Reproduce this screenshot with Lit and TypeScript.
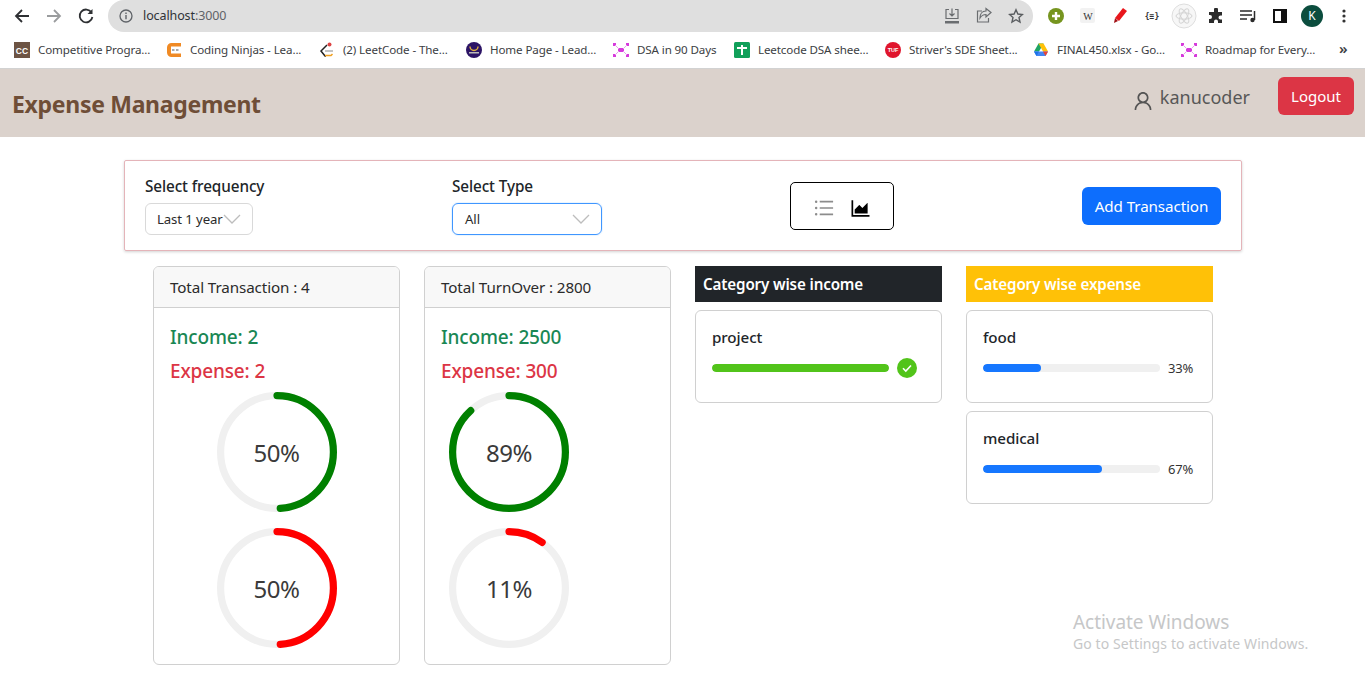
import { LitElement, html, css, svg } from "lit";
import { customElement } from "lit/decorators.js";

const USER = "M858.5 763.6a374 374 0 00-80.6-119.5 375.63 375.63 0 00-119.5-80.6c-.4-.2-.8-.3-1.2-.5C719.5 518 760 444.7 760 362c0-137-111-248-248-248S264 225 264 362c0 82.7 40.5 156 102.8 201.1-.4.2-.8.3-1.2.5-44.8 18.9-85 46-119.5 80.6a375.63 375.63 0 00-80.6 119.5A371.7 371.7 0 00136 901.8a8 8 0 008 8.2h60c4.4 0 8-3.6 8-7.8 2-77.2 33-149.5 87.8-204.3 56.7-56.7 132-87.9 212.2-87.9s155.5 31.2 212.2 87.9C779 752.7 810 825 812 902.2c.1 4.4 3.6 7.8 8 7.8h60a8 8 0 008-8.2c-1-47.8-10.9-94.3-29.5-138.2zM512 534c-45.9 0-89.1-17.9-121.6-50.4S340 407.9 340 362c0-45.9 17.9-89.1 50.4-121.6S466.1 190 512 190s89.1 17.9 121.6 50.4S684 316.1 684 362c0 45.9-17.9 89.1-50.4 121.6S557.9 534 512 534z";
const LIST = "M912 192H328c-4.4 0-8 3.6-8 8v56c0 4.4 3.6 8 8 8h584c4.4 0 8-3.6 8-8v-56c0-4.4-3.6-8-8-8zm0 284H328c-4.4 0-8 3.6-8 8v56c0 4.4 3.6 8 8 8h584c4.4 0 8-3.6 8-8v-56c0-4.4-3.6-8-8-8zm0 284H328c-4.4 0-8 3.6-8 8v56c0 4.4 3.6 8 8 8h584c4.4 0 8-3.6 8-8v-56c0-4.4-3.6-8-8-8zM104 228a56 56 0 10112 0 56 56 0 10-112 0zm0 284a56 56 0 10112 0 56 56 0 10-112 0zm0 284a56 56 0 10112 0 56 56 0 10-112 0z";
const AREA = "M888 792H200V168c0-4.4-3.6-8-8-8h-56c-4.4 0-8 3.6-8 8v688c0 4.4 3.6 8 8 8h752c4.4 0 8-3.6 8-8v-56c0-4.4-3.6-8-8-8zm-616-64h536c4.4 0 8-3.6 8-8V284c0-7.2-8.7-10.7-13.7-5.7L592 488.6l-125.4-124a8.03 8.03 0 00-11.3 0l-189 189.6a7.87 7.87 0 00-2.3 5.6V720c0 4.4 3.6 8 8 8z";

const fav: Record<string, unknown> = {
  cc: svg`<rect x="0" y="0" width="16" height="16" fill="#6d5444"/><text x="8" y="11.5" font-size="8.5" font-weight="700" fill="#fff" text-anchor="middle" font-family="Liberation Sans">CC</text>`,
  cn: svg`<path d="M15 1H5.500A4.500 4.500 0 0 0 1 5.500v5A4.500 4.500 0 0 0 5.500 15H15v-3.500H5V4.500h10z" fill="#f08a24"/><rect x="6" y="7.500" width="2.500" height="1" fill="#555"/><rect x="10" y="7.500" width="2.500" height="1" fill="#555"/>`,
  lc: svg`<path d="M8 3 2 9l4 5h1" fill="none" stroke="#222" stroke-width="1.500"/><path d="M6 9h8" stroke="#aaa" stroke-width="1.400"/><path d="M6 13.500h6l1.500-1.500" fill="none" stroke="#f0a020" stroke-width="1.500"/><circle cx="10.500" cy="2.500" r="2" fill="#d44"/>`,
  lead: svg`<circle cx="8" cy="8" r="8" fill="#2c1466"/><path d="M4 4.500a4 4 0 0 0 8 0" fill="none" stroke="#e0b040" stroke-width="1.500"/><rect x="3" y="10" width="10" height="1.500" fill="#bbb"/>`,
  dsa: svg`<g fill="#d63bdc"><rect x="0" y="1" width="3" height="3"/><rect x="13" y="1" width="3" height="3"/><rect x="0" y="12" width="3" height="3"/><rect x="13" y="12" width="3" height="3"/><rect x="5" y="6" width="6" height="4"/></g><path d="M2 3l4 4M14 3l-4 4M2 13l4-4M14 13l-4-4" stroke="#e9a0ec" stroke-width="1"/>`,
  sheet: svg`<rect width="16" height="16" rx="1.500" fill="#11a05a"/><path d="M3 6h10M8 3v10" stroke="#fff" stroke-width="2"/>`,
  tuf: svg`<circle cx="8" cy="8" r="8" fill="#e0152d"/><text x="8" y="10" font-size="5.500" font-weight="700" fill="#fff" text-anchor="middle" font-family="Liberation Sans">TUF</text>`,
  drive: svg`<path d="M5.500 1.500h5L6 9.500H1z" fill="#1fa463"/><path d="M10.500 1.500 15 9.500h-5L5.500 1.500z" fill="#ffc107"/><path d="M1 9.500h14l-2.500 4.500h-9z" fill="#4285f4"/><path d="M1 9.500h5l-2.500 4.500z" fill="#1a73e8"/><path d="M10 9.500h5L12.500 14z" fill="#ea4335"/>`,
};

const bookmarks: [string, string, number][] = [
  ["cc", "Competitive Progra...", 112],
  ["cn", "Coding Ninjas - Lea...", 113],
  ["lc", "(2) LeetCode - The...", 107],
  ["lead", "Home Page - Lead...", 107],
  ["dsa", "DSA in 90 Days", 81],
  ["sheet", "Leetcode DSA shee...", 111],
  ["tuf", "Striver's SDE Sheet...", 108],
  ["drive", "FINAL450.xlsx - Go...", 108],
  ["dsa", "Roadmap for Every...", 109],
];

@customElement("ring-progress")
class RingProgress extends LitElement {
  static properties = { pct: { type: Number }, color: {} };
  pct = 0;
  color = "green";
  static styles = css`
    :host { display: block; width: 120px; height: 120px; position: relative; }
    svg { display: block; transform: rotate(-90deg); }
    .lbl { position: absolute; inset: 0; display: flex; align-items: center; justify-content: center; font-size: 24px; letter-spacing: -0.4px; color: #3a3a3a; }
  `;
  render() {
    const r = 56.4;
    const c = 2 * Math.PI * r;
    const len = (c * this.pct) / 100 - 3.6;
    return html`<svg width="120" height="120" viewBox="0 0 120 120">
        <circle cx="60" cy="60" r="${r}" fill="none" stroke="#f0f0f0" stroke-width="7.2"></circle>
        <circle cx="60" cy="60" r="${r}" fill="none" stroke="${this.color}" stroke-width="7.2" stroke-linecap="round" stroke-dasharray="${len} ${c}"></circle>
      </svg><div class="lbl">${this.pct}%</div>`;
  }
}

@customElement("app-root")
class AppRoot extends LitElement {
  static styles = css`
    :host { display: block; height: 681px; overflow: hidden; background: #fff; font-family: "Noto Sans", sans-serif; color: #212529; position: relative; }
    * { box-sizing: border-box; }
    .top { height: 32px; display: flex; align-items: center; background: #fff; }
    .navs { width: 108px; display: flex; flex: none; align-items: center; padding-left: 13px; gap: 14px; }
    .navs svg { display: block; flex: none; }
    .omni { width: 925px; height: 32px; border-radius: 16px; background: #dfdfdf; display: flex; align-items: center; padding: 0 1px 0 11px; flex: none; }
    .omni > svg { margin-bottom: 1px; }
    .omni .url { font-size: 12.500px; margin: 0 0 2px 10px; flex: 1; color: #303338; letter-spacing: -0.1px; }
    .omni .port { color: #5f6368; }
    .omni-r { display: flex; align-items: center; }
    .slot { width: 32px; height: 32px; flex: none; display: flex; align-items: center; justify-content: center; }
    .slot svg { display: block; flex: none; }
    .exts { flex: 1; display: flex; align-items: center; padding-left: 7px; }
    .bm { height: 37px; display: flex; align-items: center; padding-left: 14px; gap: 16px; background: #fff; border-bottom: 1px solid #d2d2d2; position: relative; }
    .bi { display: flex; align-items: center; gap: 8px; flex: none; }
    .bi svg { display: block; flex: none; }
    .bi span { display: block; font-size: 11.600px; white-space: nowrap; color: #3c4043; letter-spacing: -0.12px; padding-bottom: 2px; }
    .more { flex: none; margin-left: 9px; font-size: 15px; color: #3c4043; line-height: 1; font-weight: 600; padding-bottom: 3px; }
    .nav { height: 68px; background: #dbd2cc; display: flex; align-items: flex-start; padding: 0 11px 0 12px; }
    .brand { font-size: 23px; font-weight: 700; color: #6f4e37; flex: 1; letter-spacing: -0.3px; margin-top: 19px; line-height: 32px; }
    .usr { display: flex; align-items: flex-start; gap: 7px; margin: 15px 28px 0 0; color: #575757; font-size: 18px; line-height: 26px; }
    .usr svg { margin-top: 7px; }
    .logout { background: #dc3545; color: #fff; border: 0; border-radius: 6px; width: 76px; height: 38px; font: inherit; font-size: 15px; margin-top: 8px; padding: 0; }
    .filters { margin: 23px 0 0 124px; width: 1118px; height: 91px; border: 1px solid #e4b4b9; border-radius: 2px; box-shadow: 0 1px 3px rgba(0,0,0,.18); display: flex; align-items: flex-start; padding: 0 20px; position: relative; }
    .fg { display: flex; flex-direction: column; padding-top: 13px; }
    .fg label { font-size: 15.300px; font-weight: 500; height: 29px; line-height: 24px; letter-spacing: -0.1px; color: #212529; white-space: nowrap; }
    .f1 { width: 307px; } .f2 { width: 338px; }
    .sel { height: 32px; border: 1px solid #d9d9d9; border-radius: 6px; display: flex; align-items: center; justify-content: space-between; font-size: 13.200px; padding: 0 11px; letter-spacing: -0.1px; color: #2b2b2b; }
    .sel svg { display: block; flex: none; }
    .sel.a { width: 108px; padding-right: 11px; }
    .sel.b { width: 150px; padding-left: 12px; border-color: #4096ff; box-shadow: 0 0 0 1px rgba(5,145,255,.08); }
    .toggle { width: 104px; height: 48px; border: 1px solid #000; border-radius: 5px; margin-top: 21px; display: flex; align-items: center; justify-content: center; gap: 16px; padding: 4px 0 0 1px; }
    .toggle svg { display: block; }
    .add { margin: 26px 0 0 auto; background: #0d6efd; color: #fff; border: 0; border-radius: 6px; width: 139px; height: 38px; font: inherit; font-size: 15.200px; padding: 0; letter-spacing: -0.1px; }
    .grid { display: grid; grid-template-columns: repeat(4, 247px); column-gap: 24px; margin: 15px 0 0 153px; align-items: start; }
    .card { border: 1px solid #d0d0d0; border-radius: 6px; }
    .tall { height: 399px; }
    .chead { height: 41px; background: #f8f8f8; border-bottom: 1px solid #d0d0d0; border-radius: 5px 5px 0 0; display: flex; align-items: center; padding: 0 16px; font-size: 15.200px; letter-spacing: -0.1px; color: #2b2b2b; }
    .cbody { padding: 17px 16px 0; }
    .inc, .exp { font-size: 19px; font-weight: 500; line-height: 24px; height: 34px; letter-spacing: -0.15px; }
    .inc { color: #198754; } .exp { color: #dc3545; }
    .rings { display: flex; flex-direction: column; gap: 16px; align-items: center; margin-top: -1px; }
    .rings.left { align-items: flex-start; padding-left: 8px; }
    .cathead { height: 36px; display: flex; align-items: center; padding: 0 8px; font-size: 15.200px; font-weight: 600; color: #fff; letter-spacing: -0.15px; }
    .dark { background: #212529; } .yellow { background: #ffc107; }
    .cat { height: 93px; margin-top: 8px; border: 1px solid #d0d0d0; border-radius: 6px; padding: 16px 16px 0; }
    .cat h6 { margin: 0; font-size: 15.200px; font-weight: 500; line-height: 20px; letter-spacing: -0.1px; color: #212529; }
    .pr { display: flex; align-items: center; margin-top: 10px; height: 22px; }
    .bar { width: 177px; height: 8px; border-radius: 4px; background: #f0f0f0; overflow: hidden; flex: none; }
    .bar i { display: block; height: 100%; border-radius: 4px; background: #1677ff; }
    .bar i.ok { background: #52c41a; }
    .pct { margin-left: 8px; font-size: 13px; color: #333; letter-spacing: -0.15px; }
    .pr svg { margin-left: 8px; display: block; }
    .wm { position: absolute; left: 1073px; top: 610px; color: #c6c7c8; pointer-events: none; }
    .wm b { display: block; font-weight: 400; font-size: 19px; line-height: 25px; letter-spacing: -0.05px; }
    .wm span { display: block; font-size: 14px; line-height: 20px; letter-spacing: 0.1px; margin-top: -1px; }
  `;

  private stat(title: string, inc: string, exp: string, p1: number, p2: number, left = false) {
    return html`<div class="card tall">
      <div class="chead">${title}</div>
      <div class="cbody">
        <div class="inc">Income: ${inc}</div>
        <div class="exp">Expense: ${exp}</div>
        <div class="rings ${left ? "left" : ""}">
          <ring-progress .pct=${p1} color="green"></ring-progress>
          <ring-progress .pct=${p2} color="red"></ring-progress>
        </div>
      </div>
    </div>`;
  }

  private cat(name: string, pct: number) {
    const done = pct >= 100;
    return html`<div class="cat">
      <h6>${name}</h6>
      <div class="pr">
        <div class="bar"><i class="${done ? "ok" : ""}" style="width:${pct}%"></i></div>
        ${done
          ? html`<svg width="20" height="20" viewBox="0 0 20 20"><circle cx="10" cy="10" r="10" fill="#52c41a"/><path d="M6 10.300l2.800 2.800L14 7.500" fill="none" stroke="#fff" stroke-width="1.600"/></svg>`
          : html`<span class="pct">${pct}%</span>`}
      </div>
    </div>`;
  }

  render() {
    const chev = html`<svg width="18" height="10" viewBox="0 0 18 10"><path d="M1 1l8 8 8-8" fill="none" stroke="#bdbdbd" stroke-width="1.300"/></svg>`;
    return html`
      <div class="top">
        <div class="navs">
          <svg width="18" height="18" viewBox="0 0 18 18"><path d="M16 9H3M9 3 3 9l6 6" fill="none" stroke="#2e3033" stroke-width="1.800"/></svg>
          <svg width="18" height="18" viewBox="0 0 18 18"><path d="M2 9h13M9 3l6 6-6 6" fill="none" stroke="#9a9c9e" stroke-width="1.800"/></svg>
          <svg width="18" height="18" viewBox="0 0 18 18"><path d="M14.500 5.500A6.400 6.400 0 1 0 15.400 10" fill="none" stroke="#2e3033" stroke-width="1.800"/><path d="M15.500 2v5h-5z" fill="#2e3033"/></svg>
        </div>
        <div class="omni">
          <svg width="14" height="14" viewBox="0 0 14 14"><circle cx="7" cy="7" r="6" fill="none" stroke="#5f6368" stroke-width="1.300"/><path d="M7 6v4.200M7 3.600v1.300" stroke="#5f6368" stroke-width="1.400"/></svg>
          <div class="url">localhost<span class="port">:3000</span></div>
          <div class="omni-r">
            <div class="slot"><svg width="18" height="18" viewBox="0 0 18 18" fill="none" stroke="#6a6d70" stroke-width="1.200"><path d="M6 2.500H3v9h12v-9h-3M9 1.500v7M6.500 6.500 9 9l2.500-2.500"/><path d="M2 14h14v2.500H2z" fill="#6a6d70" stroke="none"/></svg></div>
            <div class="slot"><svg width="18" height="18" viewBox="0 0 18 18" fill="none" stroke="#6a6d70" stroke-width="1.200"><path d="M7 4H2.500v11h11v-4M16 5.500 11 1.500v2.500C7 4 5 7 5 11c1.500-2.500 3.500-3.500 6-3.500V10z"/></svg></div>
            <div class="slot"><svg width="16" height="16" viewBox="0 0 16 16"><path d="M8 1.800l1.900 4.200 4.500.5-3.400 3 1 4.500L8 11.700 4 14l1-4.500-3.400-3 4.500-.5z" fill="none" stroke="#5a5d60" stroke-width="1.400"/></svg></div>
          </div>
        </div>
        <div class="exts">
          <div class="slot"><svg width="16" height="16" viewBox="0 0 16 16"><circle cx="8" cy="8" r="8" fill="#76951f"/><path d="M8 4v8M4 8h8" stroke="#fff" stroke-width="2.400"/></svg></div>
          <div class="slot"><svg width="16" height="16" viewBox="0 0 16 16"><rect width="15" height="15" rx="2" fill="#f2f2f2"/><text x="8" y="12" font-size="10" font-family="Liberation Serif" text-anchor="middle" fill="#333">W</text></svg></div>
          <div class="slot"><svg width="16" height="18" viewBox="0 0 16 18"><path d="M11 1l4 3-8 10-4-3z" fill="#e8161c"/><path d="M3 11l3 3-4 2z" fill="#a01015"/></svg></div>
          <div class="slot"><svg width="18" height="12" viewBox="0 0 18 12"><text x="9" y="9" font-size="8" font-weight="700" font-family="DejaVu Sans Mono" text-anchor="middle" fill="#333">{≡}</text></svg></div>
          <div class="slot"><svg width="26" height="26" viewBox="0 0 26 26"><circle cx="13" cy="13" r="12" fill="#f7f7f7" stroke="#dedede"/><g fill="none" stroke="#d4d4d4"><ellipse cx="13" cy="13" rx="8" ry="3.200"/><ellipse cx="13" cy="13" rx="8" ry="3.200" transform="rotate(60 13 13)"/><ellipse cx="13" cy="13" rx="8" ry="3.200" transform="rotate(120 13 13)"/></g></svg></div>
          <div class="slot"><svg width="16" height="16" viewBox="0 0 16 16"><path d="M6 1.500a2 2 0 0 1 4 0V4h4v3.500h-1.500a2 2 0 0 0 0 4H14V15h-4v-1.500a2 2 0 0 0-4 0V15H1v-4h1a2 2 0 0 0 0-4H1V4h5z" fill="#2b2b2b"/></svg></div>
          <div class="slot"><svg width="18" height="14" viewBox="0 0 18 14"><path d="M1 2h12M1 6h12M1 10h7" stroke="#2b2b2b" stroke-width="1.500"/><path d="M15.500 2v9" stroke="#2b2b2b" stroke-width="1.500"/><circle cx="13.500" cy="11" r="2.200" fill="#2b2b2b"/></svg></div>
          <div class="slot"><svg width="14" height="14" viewBox="0 0 14 14"><rect x="1" y="1" width="12" height="12" fill="none" stroke="#111" stroke-width="2"/><rect x="8" y="1" width="5" height="12" fill="#111"/></svg></div>
          <div class="slot"><svg width="22" height="22" viewBox="0 0 22 22"><circle cx="11" cy="11" r="11" fill="#0b4d3e"/><text x="11" y="15" font-size="12" font-family="Noto Sans" text-anchor="middle" fill="#fff">K</text></svg></div>
          <div class="slot"><svg width="4" height="14" viewBox="0 0 4 14" fill="#333"><circle cx="2" cy="2" r="1.600"/><circle cx="2" cy="7" r="1.600"/><circle cx="2" cy="12" r="1.600"/></svg></div>
        </div>
      </div>
      <div class="bm">
        ${bookmarks.map(
          ([k, t, w]) => html`<div class="bi">
            <svg width="16" height="16" viewBox="0 0 16 16">${fav[k]}</svg>
            <span style="width:${w}px">${t}</span>
          </div>`
        )}
        <div class="more">»</div>
      </div>
      <div class="nav">
        <div class="brand">Expense Management</div>
        <div class="usr">
          <svg width="20" height="20" viewBox="64 64 896 896" fill="#545454"><path d="${USER}"/></svg>
          <span>kanucoder</span>
        </div>
        <button class="logout">Logout</button>
      </div>
      <div class="filters">
        <div class="fg f1"><label>Select frequency</label><div class="sel a"><span>Last 1 year</span>${chev}</div></div>
        <div class="fg f2"><label>Select Type</label><div class="sel b"><span>All</span>${chev}</div></div>
        <div class="toggle">
          <svg width="20" height="20" viewBox="64 64 896 896" fill="#8c8c8c"><path d="${LIST}"/></svg>
          <svg width="21" height="21" viewBox="64 64 896 896" fill="#000"><path d="${AREA}"/></svg>
        </div>
        <button class="add">Add Transaction</button>
      </div>
      <div class="grid">
        ${this.stat("Total Transaction : 4", "2", "2", 50, 50)}
        ${this.stat("Total TurnOver : 2800", "2500", "300", 89, 11, true)}
        <div>
          <div class="cathead dark">Category wise income</div>
          ${this.cat("project", 100)}
        </div>
        <div>
          <div class="cathead yellow">Category wise expense</div>
          ${this.cat("food", 33)}
          ${this.cat("medical", 67)}
        </div>
      </div>
      <div class="wm"><b>Activate Windows</b><span>Go to Settings to activate Windows.</span></div>
    `;
  }
}
